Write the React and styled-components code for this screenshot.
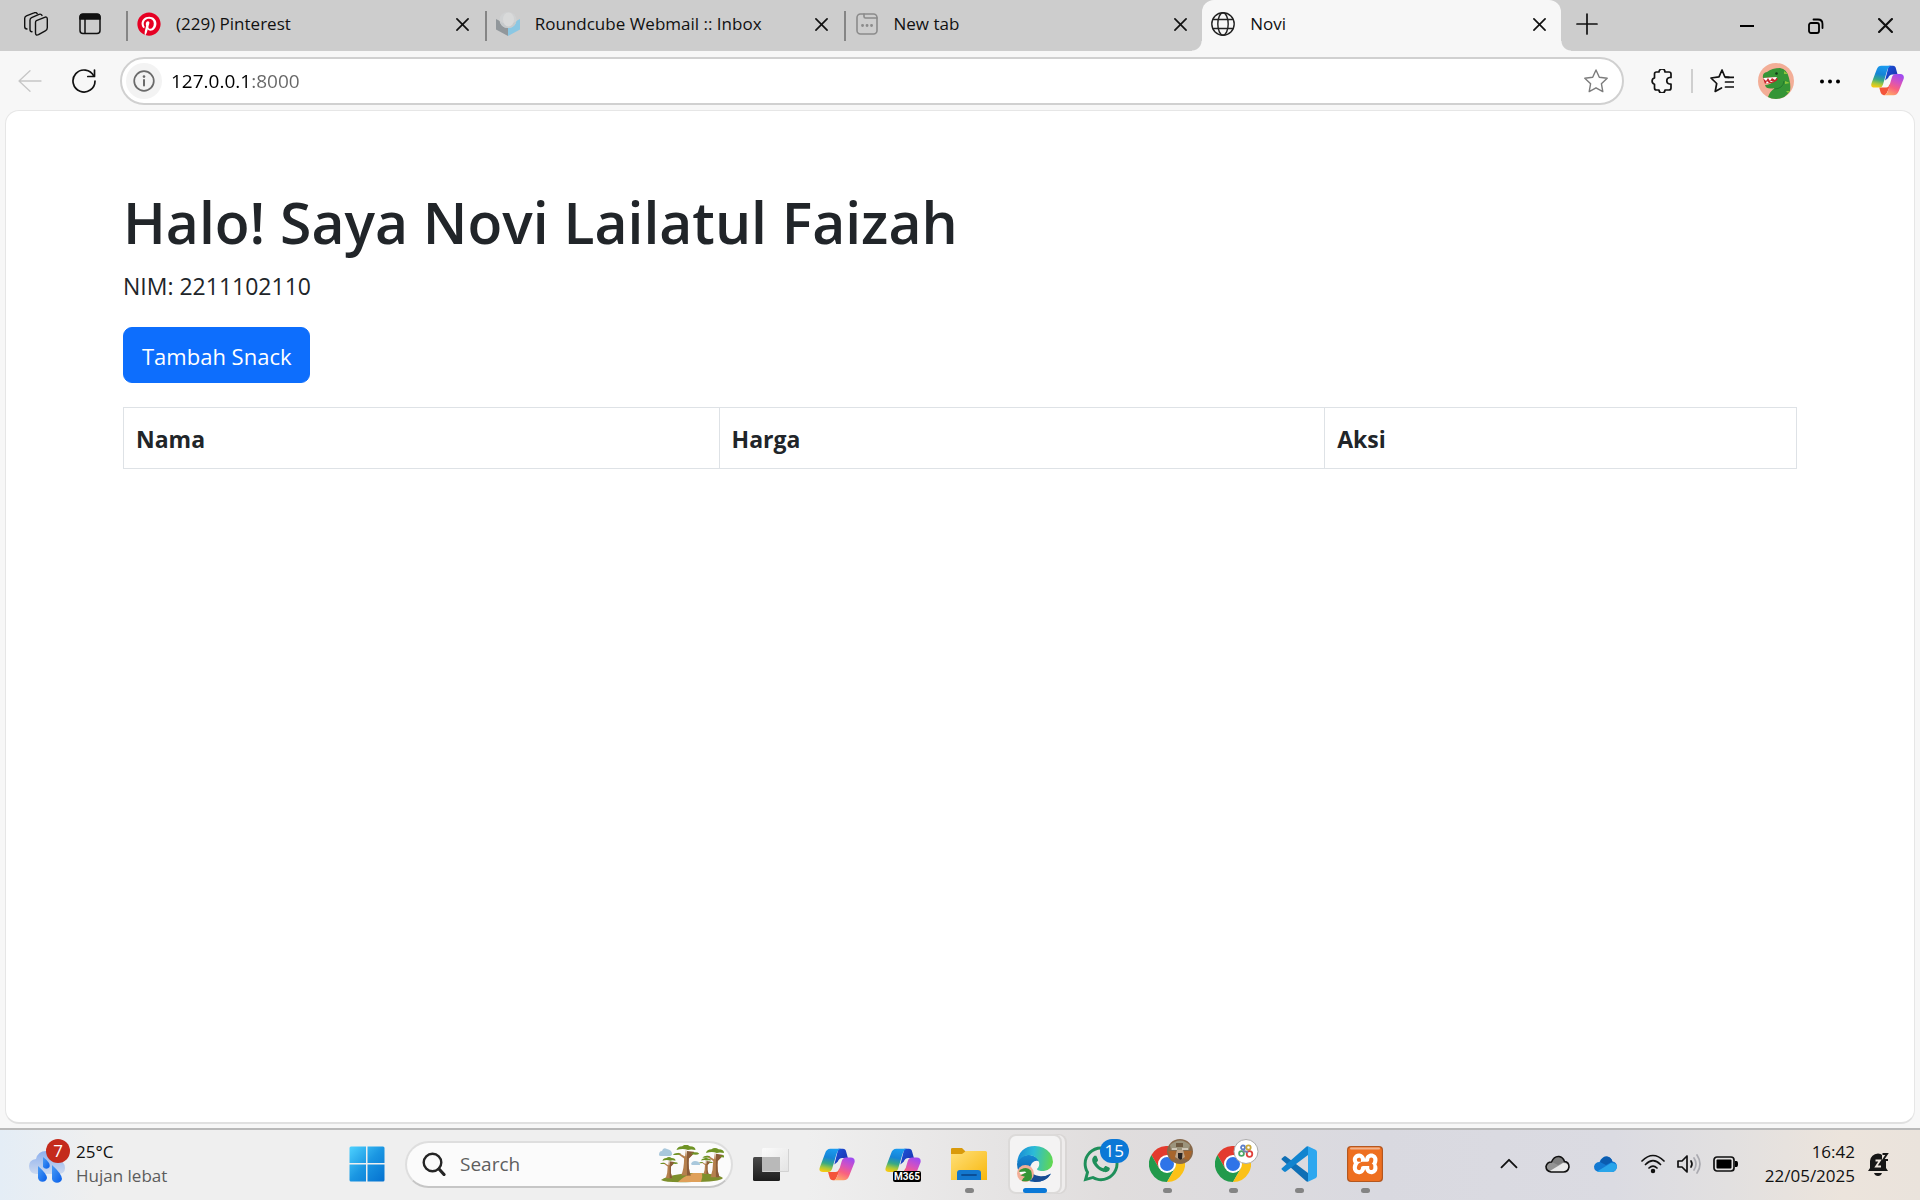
import React from "react";
import styled, { createGlobalStyle, css } from "styled-components";
import { FaPinterest, FaWhatsapp } from "react-icons/fa";
import { SiXampp } from "react-icons/si";

const GlobalStyle = createGlobalStyle`
  *, *::before, *::after { box-sizing: border-box; }
  body {
    margin: 0;
    font-family: "Segoe UI", "Open Sans", "Noto Sans", sans-serif;
    color: #111;
    background: #f7f7f7;
  }
  button, input { font: inherit; color: inherit; }
  svg { display: block; flex: none; }
`;

const Desktop = styled.div`
  display: flex;
  flex-direction: column;
  min-height: 100vh;
`;

/* ---------- browser chrome ---------- */

const TabStrip = styled.header`
  display: flex;
  height: 51px;
  background: #cdcdcd;
`;

const IconButton = styled.button`
  display: inline-flex;
  align-items: center;
  justify-content: center;
  flex: none;
  width: ${(p) => p.$width || 36}px;
  height: 36px;
  padding: 0;
  border: 0;
  border-radius: 6px;
  background: none;
  color: ${(p) => p.$color || "#111"};
`;

const StripTools = styled.div`
  display: flex;
  align-items: center;
  gap: 18px;
  width: 126px;
  height: 48px;
  padding-left: 18px;
`;

const Tabs = styled.nav`
  display: flex;
  flex: 0 1 1435px;
  min-width: 0;
`;

const TabItem = styled.div`
  position: relative;
  display: flex;
  align-items: center;
  flex: 1 1 0;
  min-width: 0;
  height: 51px;
  padding: 0 4px 3px 0;
  ${(p) =>
    p.$active &&
    css`
      background: #f7f7f7;
      border-radius: 12px 12px 0 0;
      &::before,
      &::after {
        content: "";
        position: absolute;
        bottom: 0;
        width: 10px;
        height: 10px;
      }
      &::before {
        left: -10px;
        background: radial-gradient(circle at 0 0, transparent 9px, #f7f7f7 10px);
      }
      &::after {
        right: -10px;
        background: radial-gradient(circle at 100% 0, transparent 9px, #f7f7f7 10px);
      }
    `}
`;

const TabDivider = styled.span`
  flex: none;
  width: 2px;
  height: 30px;
  margin-top: 4px;
  background: #858585;
`;

const TabLabel = styled.button`
  display: flex;
  align-items: center;
  gap: 15px;
  flex: 1;
  min-width: 0;
  height: 48px;
  padding: 0 0 0 9px;
  border: 0;
  background: none;
  font-size: 17px;
  line-height: 24px;
  text-align: left;
  white-space: nowrap;
`;

const WindowControls = styled.div`
  display: flex;
  align-items: center;
  gap: 33px;
  margin-left: auto;
  padding-right: 17px;
`;

const Toolbar = styled.div`
  display: flex;
  align-items: center;
  height: 59px;
  padding: 0 12px;
  background: #f7f7f7;
`;

const AddressBar = styled.form`
  display: flex;
  align-items: center;
  flex: 1;
  min-width: 0;
  height: 48px;
  margin: 0 20px 0 18px;
  padding: 0 8px 0 4px;
  border: 2px solid #d0d0d0;
  border-radius: 24px;
  background: #fff;
`;

const SiteInfo = styled(IconButton)`
  border-radius: 50%;
  background: #f3f3f3;
`;

const AddressInput = styled.input`
  flex: 1;
  min-width: 0;
  height: 36px;
  margin-left: 9px;
  padding: 0;
  border: 0;
  outline: 0;
  font-size: 19px;
  color: #666;
  background: linear-gradient(90deg, #000 80px, #666 80px);
  background-clip: text;
  -webkit-background-clip: text;
  -webkit-text-fill-color: transparent;
`;

const ToolGroup = styled.div`
  display: flex;
  align-items: center;
  gap: 18px;
`;

const ToolDivider = styled.span`
  width: 2px;
  height: 24px;
  margin: 0 -7px;
  background: #cfcfcf;
`;

/* ---------- web page ---------- */

const Frame = styled.div`
  display: flex;
  flex: 1;
  padding: 0 5px 4px;
  background: #f7f7f7;
  border-bottom: 2px solid #b9b9b9;
`;

const Page = styled.main`
  flex: 1;
  padding: 75px 117px 48px;
  border: 1px solid #e6e6e6;
  border-bottom: 2px solid #e0e0e0;
  border-radius: 14px;
  background: #fff;
  color: #212529;
  font-size: 23px;
  line-height: 36px;
`;

const Title = styled.h1`
  margin: 0 0 10px;
  font-size: 57px;
  font-weight: 600;
  line-height: 72px;
`;

const Student = styled.p`
  margin: 0 0 23px;
`;

const AddButton = styled.button`
  display: block;
  margin: 0 0 24px;
  padding: 10px 18px 8px;
  border: 1px solid #0d6efd;
  border-radius: 9px;
  background: #0d6efd;
  color: #fff;
  font-size: 22px;
`;

const SnackTable = styled.table`
  width: 100%;
  border-collapse: collapse;
  th {
    padding: 13px 12px 11px;
    border: 1px solid #dee2e6;
    text-align: left;
    font-weight: 700;
  }
`;

/* ---------- taskbar ---------- */

const Taskbar = styled.footer`
  display: flex;
  align-items: center;
  height: 70px;
  padding-bottom: 2px;
  background: linear-gradient(
    90deg,
    #e4edf6 0%,
    #efefef 5%,
    #efefef 42%,
    #e0dddd 58%,
    #d9d9e0 72%,
    #dbdbe2 84%,
    #e2e0e0 90%,
    #ece4dc 96%,
    #eae3dc 100%
  );
`;

const Weather = styled.button`
  display: flex;
  align-items: center;
  gap: 9px;
  width: 334px;
  height: 100%;
  padding: 0 0 0 29px;
  border: 0;
  background: none;
  text-align: left;
  font-size: 17px;
  line-height: 24px;
`;

const Muted = styled.span`
  display: block;
  color: #5c5c5c;
`;

const IconHolder = styled.span`
  position: relative;
  display: block;
`;

const Badge = styled.span`
  position: absolute;
  display: flex;
  align-items: center;
  justify-content: center;
  top: ${(p) => p.$top}px;
  right: ${(p) => p.$right}px;
  min-width: 24px;
  height: 24px;
  padding: 0 5px;
  border-radius: 12px;
  background: ${(p) => p.$color};
  color: #fff;
  font-size: 17px;
  line-height: 24px;
`;

const AppTag = styled.span`
  position: absolute;
  right: 0;
  bottom: -1px;
  padding: 0 1px;
  border-radius: 2px;
  background: #000;
  color: #fff;
  font: 700 10px/11px Roboto, sans-serif;
`;

const MiniAvatar = styled.span`
  position: absolute;
  top: -7px;
  right: -8px;
`;

const Apps = styled.div`
  display: flex;
  align-items: center;
  height: 100%;
`;

const AppButton = styled.button`
  position: relative;
  display: flex;
  align-items: center;
  justify-content: center;
  width: 66px;
  height: 68px;
  padding: 0;
  border: 0;
  background: none;
  &::after {
    content: "";
    display: ${(p) => (p.$running || p.$active ? "block" : "none")};
    position: absolute;
    bottom: 5px;
    left: 50%;
    width: ${(p) => (p.$active ? 24 : 9)}px;
    margin-left: ${(p) => (p.$active ? -12 : -4)}px;
    height: 5px;
    border-radius: 3px;
    background: ${(p) => (p.$active ? "#0a78d7" : "#848484")};
  }
`;

const ActivePlate = styled.span`
  display: flex;
  align-items: center;
  justify-content: center;
  width: 54px;
  height: 60px;
  border: 2px solid #dcdad9;
  border-radius: 8px;
  background: #f4f3f3;
  box-shadow: 4px 0 0 -1px #eeecec, 5px 0 0 0 #d9d6d5;
`;

const SearchBox = styled.label`
  display: flex;
  align-items: center;
  gap: 14px;
  width: 328px;
  height: 47px;
  margin: 0 5px;
  padding: 0 7px 0 15px;
  border: 2px solid #dedede;
  border-bottom-color: #c6c6c6;
  border-radius: 24px;
  background: #fbfbfb;
`;

const SearchInput = styled.input`
  flex: 1;
  min-width: 0;
  padding: 0;
  border: 0;
  outline: 0;
  background: none;
  font-size: 19px;
  &::placeholder {
    color: #5e5e5e;
    opacity: 1;
  }
`;

const Tray = styled.div`
  display: flex;
  align-items: center;
  margin-left: auto;
  padding-right: 17px;
`;

const Clock = styled.button`
  width: 106px;
  padding: 0;
  border: 0;
  background: none;
  text-align: right;
  font-size: 17px;
  line-height: 24px;
  white-space: nowrap;
`;

/* ---------- icons ---------- */

const Line = ({ size = 24, w = 1.5, children, ...rest }) => (
  <svg width={size} height={size} viewBox="0 0 24 24" fill="none" stroke="currentColor"
    strokeWidth={w} strokeLinecap="round" strokeLinejoin="round" aria-hidden="true" {...rest}>
    {children}
  </svg>
);

const WorkspacesIcon = () => (
  <Line w={1.4}>
    <path d="M12.4 8.6 20.6 5.3Q23.3 4.4 23.3 7V15.8Q23.3 18 21.3 18.9L14.5 22.7Q11.5 24 11.5 21V10.6Q11.5 9 12.4 8.6Z" />
    <path d="M8 19.8Q6 19.8 6 17.5V8.2Q6 6.4 7.6 5.6L15 2.4Q17 1.6 18 3.4" />
    <path d="M3 17Q.7 17 .7 14.5V6.2Q.7 4.6 2.4 3.8L10 .9Q12.2 0 13.2 1.6" />
  </Line>
);

const VerticalTabsIcon = () => (
  <Line>
    <rect x="2" y="2.5" width="20" height="19" rx="3" />
    <path d="M2 7V5.5Q2 2 5 2h14q3 0 3 3.500V7Z" fill="currentColor" />
    <path d="M7 7V21" />
  </Line>
);

const CloseIcon = ({ size = 14, w = 2 }) => (
  <svg width={size} height={size} viewBox="0 0 14 14" stroke="currentColor" strokeWidth={w} strokeLinecap="round" aria-hidden="true">
    <path d="M1 1 13 13M13 1 1 13" />
  </svg>
);

const PinterestIcon = () => (
  <svg width="24" height="24" viewBox="0 0 24 24" aria-hidden="true">
    <circle cx="12" cy="12" r="11" fill="#fff" />
    <FaPinterest size={24} color="#e60023" />
  </svg>
);

const RoundcubeIcon = () => (
  <svg width="24" height="24" viewBox="0 0 24 24" aria-hidden="true">
    <path d="M0 7 12 13.500V24L0 17.500Z" fill="#91979b" />
    <path d="M24 7 12 13.500V24l12-6.500Z" fill="#8ac7e3" />
    <ellipse cx="12" cy="8" rx="8.500" ry="8" fill="#d0d2d3" />
    <path d="M4 9.200 12 13.800 20.500 9.200Q19 15.800 12 15.800T4 9.200" fill="#c6cacc" />
    <ellipse cx="12.500" cy="7.500" rx="5.500" ry="7" fill="#d9dada" />
  </svg>
);

const NewTabIcon = () => (
  <Line w={1.6} color="#8b8b8b">
    <rect x="2" y="2" width="20" height="20" rx="3.500" />
    <path d="M9 2V4.500Q9 6 10.500 6H22" />
    <path d="M7.500 13.500h.1M12 13.500h.1M16.500 13.500h.1" strokeWidth="2.800" />
  </Line>
);

const GlobeIcon = () => (
  <Line w={1.4} color="#222">
    <circle cx="12" cy="12" r="11.200" />
    <ellipse cx="12" cy="12" rx="5.200" ry="11.200" />
    <path d="M2 7.500H22M2 16.500H22" />
  </Line>
);

const PlusIcon = () => <Line w={1.7}><path d="M12 2V22M2 12H22" /></Line>;

const MinimiseIcon = () => (
  <svg width="16" height="16" viewBox="0 0 16 16" aria-hidden="true"><path d="M1 8H15" stroke="#000" strokeWidth="2" /></svg>
);

const RestoreIcon = () => (
  <svg width="16" height="16" viewBox="0 0 16 16" fill="none" stroke="#000" strokeWidth="1.800" strokeLinecap="round" aria-hidden="true">
    <rect x="1" y="5" width="10" height="10" rx="2" />
    <path d="M5.500 1.500H10Q14.500 1.500 14.500 6V10" />
  </svg>
);

const BackIcon = () => <Line w={1.3}><path d="M23 12H1M12 1.800 1 12 12 22.200" /></Line>;

const RefreshIcon = () => (
  <Line w={1.7}>
    <path d="M21.800 7A11 11 0 1 0 23 12" />
    <path d="M22.500 1V7.500H15.800" />
  </Line>
);

const InfoIcon = () => (
  <Line w={1.7} color="#6a6a6a">
    <circle cx="12" cy="12" r="9.800" />
    <path d="M12 11V16.500" strokeWidth="2" />
    <path d="M12 7.600h.01" strokeWidth="2.600" />
  </Line>
);

const StarIcon = () => (
  <Line w={1.4} color="#7c7c7c">
    <path d="M12 1 15.300 8.200 23.200 9.200 17.400 14.700 18.800 22.600 12 18.800 5.200 22.600 6.600 14.700 .8 9.200 8.700 8.200Z" />
  </Line>
);

const PuzzleIcon = () => (
  <Line w={1.7}>
    <path d="M9 3A3 3 0 0 1 15 3H19Q21 3 21 5V8.500H19.500A3.300 3.300 0 0 0 19.500 15H21V19Q21 21 19 21H15A3 3 0 0 1 9 21H6.500Q4.500 21 4.500 19V15.200A3.200 3.200 0 0 1 4.500 9V5Q4.500 3 6.500 3Z" />
  </Line>
);

const FavouritesIcon = () => (
  <Line w={1.7}>
    <path d="M19 8.300 14.800 7.800 12 1 9 7.800 1 9 6.700 14.500 5.200 22.500 11.500 19" />
    <path d="M15.500 8.300H23.500M15.500 13H23.500M15.500 18H23.500" />
  </Line>
);

const DinoArt = ({ size = 36 }) => (
  <svg width={size} height={size} viewBox="0 0 36 36" aria-hidden="true">
    <circle cx="18" cy="18" r="18" fill="#f3ae97" />
    <path d="M10 34Q12 28 17 25Q8 27 7 22Q12 22 16 18L5 15Q4 10 9 9Q14 5 22 5Q29 6 31 15Q33 22 32 28Q27 36 18 36Q13 36 10 34Z" fill="#359536" />
    <path d="M5 15 17 14 20 16Q17 21 8 20L7 21Z" fill="#c8272d" />
    <path d="M5 15 8 18 10 15 12 18 14 15 17 17 19 14ZM8 20 9 18 11 20 13 18 14 19 16 18Z" fill="#fff" />
    <circle cx="18.500" cy="10.500" r="1.300" fill="#143b1a" />
    <path d="M26 8 30 11 26 11ZM27 18 32 20 27 21ZM28 28 32 28 30 30Z" fill="#8bc63a" />
    <path d="M16 26Q25 26 26 18" fill="none" stroke="#237a2c" />
  </svg>
);

const DotsIcon = () => (
  <svg width="24" height="24" viewBox="0 0 24 24" aria-hidden="true">
    <circle cx="4" cy="12.500" r="2" /><circle cx="12" cy="12.500" r="2" /><circle cx="20" cy="12.500" r="2" />
  </svg>
);

const CopilotIcon = ({ id, size = 36 }) => (
  <svg width={size} height={Math.round(size * 0.93)} viewBox="0 0 108 100" aria-hidden="true">
    <defs>
      <linearGradient id={`${id}-a`} x1=".6" y1="0" x2=".4" y2="1">
        <stop offset="0" stopColor="#1b9cf0" /><stop offset=".4" stopColor="#1584d6" />
        <stop offset=".66" stopColor="#38a985" /><stop offset=".85" stopColor="#a8c83a" /><stop offset="1" stopColor="#f3ca14" />
      </linearGradient>
      <linearGradient id={`${id}-b`} x1=".7" y1="0" x2=".3" y2="1">
        <stop offset="0" stopColor="#a04bf0" /><stop offset=".35" stopColor="#d452c0" />
        <stop offset=".65" stopColor="#f9617f" /><stop offset="1" stopColor="#ffa868" />
      </linearGradient>
      <linearGradient id={`${id}-c`} x1="0" y1="0" x2="1" y2="1">
        <stop offset="0" stopColor="#1b55dd" /><stop offset="1" stopColor="#1a2fa8" />
      </linearGradient>
    </defs>
    <path d="M58 2H72Q80 2 82 12L87 30H70Q60 30 56 42L46 50Z" fill={`url(#${id}-c)`} />
    <path d="M27 73H50Q58 73 60 64L66 60 54 86Q50 98 42 98 34 98 31 88Z" fill="#f4553a" />
    <path d="M34 2Q22 2 18 16L2 58Q-3 73 12 73H30Q36 73 39 64L52 20Q57 2 68 2Z" fill={`url(#${id}-a)`} />
    <path d="M96 29Q110 30 107 44L91 84Q86 98 74 98H42Q52 98 56 82L68 41Q71 29 82 29Z" fill={`url(#${id}-b)`} />
  </svg>
);

const RainIcon = () => (
  <svg width="38" height="42" viewBox="0 0 38 42" aria-hidden="true">
    <defs>
      <linearGradient id="cloud" x1="0" y1="0" x2="0" y2="1"><stop offset="0" stopColor="#8db0ee" /><stop offset="1" stopColor="#ccd9ef" /></linearGradient>
      <linearGradient id="drop" x1="0" y1="0" x2="1" y2="1"><stop offset="0" stopColor="#4b9df5" /><stop offset="1" stopColor="#075dea" /></linearGradient>
    </defs>
    <path d="M7 31Q0 30 0 23 0 17 7 16 9 8 17 8 25 9 28 17 36 18 36 25 36 31 29 31Z" fill="url(#cloud)" />
    <path d="M14 14Q22 20 20.500 24A4 4 0 0 1 14 24Z" fill="url(#drop)" />
    <path d="M9 23Q18 31 18 35A4.600 4.600 0 0 1 9 35Z" fill="url(#drop)" />
    <path d="M23 22Q33 31 33 36A5.200 5.200 0 0 1 23 36Z" fill="url(#drop)" />
  </svg>
);

const WindowsIcon = () => (
  <svg width="36" height="36" viewBox="0 0 36 36" aria-hidden="true">
    <defs><linearGradient id="win" x1="0" y1="0" x2="36" y2="36" gradientUnits="userSpaceOnUse"><stop offset="0" stopColor="#4fd3ff" /><stop offset=".5" stopColor="#1a96e2" /><stop offset="1" stopColor="#0470cf" /></linearGradient></defs>
    <path d="M2 .5H17V17H.5V2Q.5.5 2 .5ZM18.500.5H34Q35.500.5 35.500 2V17H18.500ZM.5 18.500H17V35.500H2Q.5 35.500.5 34ZM18.500 18.500H35.500V34Q35.500 35.500 34 35.500H18.500Z" fill="url(#win)" />
  </svg>
);

const SearchIcon = () => (
  <svg width="24" height="24" viewBox="0 0 24 24" fill="none" stroke="#252525" aria-hidden="true">
    <circle cx="10.500" cy="10.500" r="8.800" strokeWidth="2.400" /><path d="M17 17 22 22.500" strokeWidth="3.200" strokeLinecap="round" />
  </svg>
);

const Baobab = ({ x, y, s }) => (
  <g transform={`translate(${x} ${y}) scale(${s})`}>
    <path d="M-5 28Q-2 20-2 10L-9 5-8 4-1 8 0 0 1 8 8 3 9 4 3 10Q2 20 5 28Z" fill="#b5804d" />
    <path d="M1 2 8 3 9 4 3 10Q2 20 5 28H1Z" fill="#8a5c38" />
    <path d="M-10 1Q-9-3-4-3 0-6 4-3 10-3 10 1 5 0 2 1-3-1-10 1ZM-14 6Q-11 3-5 5-8 7-14 6ZM5 5Q11 2 14 5 11 7 5 5Z" fill="#6f9325" />
  </g>
);

const SavannahArt = () => (
  <svg width="66" height="38" viewBox="0 0 66 38" aria-hidden="true">
    <path d="M1 10Q1 6 4 6 5 2 9 4 14 5 14 9 14 11 11 11H3Q1 11 1 10ZM33 19Q34 16 37 16 41 16 42 19V20H34Z" fill="#a9c8dc" />
    <path d="M3 35Q12 29 35 28 58 28 65 33 62 37 34 37 8 38 3 35Z" fill="#7d8f2c" />
    <path d="M20 37Q26 31 35 28L44 28Q45 32 43 37Z" fill="#dfa05a" />
    <Baobab x={11} y={15} s={0.65} /><Baobab x={28} y={4} s={0.95} />
    <Baobab x={48} y={15} s={0.5} /><Baobab x={57} y={7} s={0.9} />
  </svg>
);

const TaskViewIcon = () => (
  <svg width="36" height="36" viewBox="0 0 36 36" aria-hidden="true">
    <defs>
      <linearGradient id="tv" x1="0" y1="0" x2="0" y2="1"><stop offset="0" stopColor="#4a4a4a" /><stop offset="1" stopColor="#1c1c1c" /></linearGradient>
      <linearGradient id="tvLight" x1="0" y1="0" x2="1" y2="1"><stop offset="0" stopColor="#fbfbfb" /><stop offset="1" stopColor="#e3e3e3" /></linearGradient>
    </defs>
    <rect x="0" y="11" width="27" height="24" rx="1.500" fill="url(#tv)" />
    <rect x="9" y="2" width="27" height="24" rx="1.500" fill="url(#tvLight)" />
    <path d="M9 11H27V26H9Z" fill="#b9b9b9" />
    <path d="M35.500 3V25.500H10" fill="none" stroke="#d2d2d2" />
  </svg>
);

const FolderIcon = () => (
  <svg width="36" height="36" viewBox="0 0 36 36" aria-hidden="true">
    <defs><linearGradient id="fold" x1="0" y1="0" x2="1" y2="1"><stop offset="0" stopColor="#ffe07a" /><stop offset="1" stopColor="#f8b70c" /></linearGradient></defs>
    <path d="M0 9V3Q0 2 1.500 2H11L15 6 13 9Z" fill="#d99a0b" />
    <path d="M0 8H11L15 5H34.500Q36 5 36 6.500V34H0Z" fill="url(#fold)" />
    <path d="M6 34V27Q6 24 9 24H27Q30 24 30 27V34Z" fill="#1378cf" /><path d="M11 29H25" stroke="#0b4f97" strokeWidth="1.800" strokeLinecap="round" />
  </svg>
);

const EdgeIcon = () => (
  <svg width="36" height="36" viewBox="0 0 36 36" aria-hidden="true">
    <defs>
      <linearGradient id="edgeTop" x1="0" y1=".4" x2="1" y2=".5"><stop offset="0" stopColor="#188bd6" /><stop offset=".45" stopColor="#2cbbd7" /><stop offset="1" stopColor="#62d84e" /></linearGradient>
      <linearGradient id="edgeMid" x1="0" y1="0" x2="0" y2="1"><stop offset="0" stopColor="#1688d2" /><stop offset="1" stopColor="#0b56a4" /></linearGradient>
    </defs>
    <path d="M0 18Q1 8 13 9 20 10 23 16 19 13 15 17 11 22 16 28 23 34 34 28 29 36 18 36 1 35 0 18Z" fill="url(#edgeMid)" />
    <path d="M13 22Q14 29 22 30 28 31 34 27.500 29 36 18 36 11 32 13 22Z" fill="#174c93" />
    <path d="M0 17Q2 0 18 0 27 0 33 7 36 11 36 16 35 24 27 25 20 25 20 23 23 20 22 16 19 9 11 9 4 10 0 17Z" fill="url(#edgeTop)" />
    <g transform="translate(0 19) scale(.47)">
      <circle cx="18" cy="18" r="18" fill="#f3ae97" />
      <path d="M10 34Q12 28 17 25L7 22 16 18 5 15Q4 10 9 9 22 2 30 12 33 22 31 29 25 37 10 34Z" fill="#359536" />
      <path d="M5 15 17 14 20 16 8 20Z" fill="#fff" />
    </g>
  </svg>
);

const ChromeIcon = () => (
  <svg width="36" height="36" viewBox="0 0 36 36" aria-hidden="true">
    <path d="M2.400 9A18 18 0 0 1 33.600 9H18L10.200 22.500Z" fill="#e33b2e" />
    <path d="M2.400 9 10.200 22.500H25.800L18 36A18 18 0 0 1 2.400 9Z" fill="#229a4b" />
    <path d="M33.600 9H18L25.800 22.500 18 36A18 18 0 0 0 33.600 9Z" fill="#fbc116" />
    <circle cx="18" cy="18" r="9" fill="#fff" /><circle cx="18" cy="18" r="7" fill="#2f74e8" />
  </svg>
);

const PhotoAvatarArt = () => (
  <svg width="26" height="25" viewBox="0 0 26 25" aria-hidden="true">
    <ellipse cx="13" cy="12.500" rx="13" ry="12.500" fill="#86684a" />
    <path d="M3 6Q13-3 23 6L22 11H4Z" fill="#9c947c" />
    <path d="M1 12H9L8 21 4 20ZM17 12H25L22 21 17 20Z" fill="#a8652c" />
    <path d="M10 11H16L18 18 13 21 8 18Z" fill="#bfa488" /><path d="M11 14H15.500L15 20 13 21 11 19Z" fill="#2b2422" />
    <path d="M5 10H10M15 10H21" stroke="#e0d8ca" strokeWidth="1.500" /><path d="M9 4H16V8H9Z" fill="#6f5a40" />
  </svg>
);

const RingsAvatarArt = () => (
  <svg width="26" height="25" viewBox="0 0 26 25" fill="none" strokeWidth="1.800" aria-hidden="true">
    <circle cx="13" cy="12.500" r="12" fill="#fff" stroke="#aaa" strokeWidth="1" />
    <circle cx="10" cy="8.500" r="2" stroke="#5d7fc9" /><circle cx="15.500" cy="8.500" r="2.200" stroke="#c9a93c" />
    <circle cx="8.500" cy="14.500" r="2.400" stroke="#4ba765" /><circle cx="16.500" cy="15" r="2.800" stroke="#e0413c" />
    <path d="M10 12 15 13" stroke="#7d7fa8" />
  </svg>
);

const VSCodeIcon = () => (
  <svg width="36" height="36" viewBox="0 0 36 36" aria-hidden="true">
    <path d="M.7 12.500 3 10.400Q4 9.700 5 10.400L27 27V35.500Q26 36 25 35L.8 13.800Q.2 13.200.7 12.500Z" fill="#0f6fb5" />
    <path d="M.7 23.500 3 25.600Q4 26.300 5 25.600L27 9V.5Q26 0 25 1L.8 22.200Q.2 22.800.7 23.500Z" fill="#1184cf" />
    <path d="M27 .3 34.500 3.800Q36 4.500 36 6V30Q36 31.500 34.500 32.200L27 35.700Z" fill="#2da7ef" />
  </svg>
);

const XamppIcon = () => (
  <svg width="36" height="36" viewBox="0 0 36 36" aria-hidden="true">
    <rect width="36" height="36" rx="4" fill="#b4571f" />
    <rect x="4" y="4" width="28" height="28" fill="#fff" />
    <SiXampp x="1" y="1" size={34} color="#ee6f20" />
    <path d="M4 2.500H32" stroke="#f0b38d" strokeWidth="2" strokeLinecap="round" />
  </svg>
);

const ChevronIcon = () => <Line w={2.2} size={20}><path d="M3 16 12 7 21 16" /></Line>;

const cloudPath = "M6 17Q1 16 1 11.500 2 7 6.500 7 9 1 14 1.500 18 2 19.500 6.500 24 7 24 12 23 17 18.500 17Z";

const CloudIcon = ({ tone }) => {
  const blue = tone === "blue";
  return (
    <svg width="25" height="18" viewBox="0 0 25 18" aria-hidden="true">
      <path d={cloudPath} fill={blue ? "#1379d2" : "#949494"} />
      <path d="M7 7Q10 1 14 1.500 18 2 19.500 6.500L13 10Z" fill={blue ? "#0b5cb0" : "#7d7d7d"} />
      <path d="M4 16.500 18 8Q24 8 24 12 23 17 18.500 17H6Z" fill={blue ? "#29a5ea" : "#e9e9e9"} />
      {!blue && <path d={cloudPath} fill="none" stroke="#111" strokeWidth="1.600" />}
    </svg>
  );
};

const WifiIcon = () => (
  <Line w={1.7}>
    <path d="M1 9Q12-2 23 9M4.500 12.500Q12 5 19.500 12.500M8 16Q12 12 16 16" /><circle cx="12" cy="19" r="1.400" fill="currentColor" />
  </Line>
);

const VolumeIcon = () => (
  <Line w={1.7}>
    <path d="M1 9H5L10 4V20L5 15H1Z" /><path d="M14 9Q16 12 14 15" />
    <path d="M17 6Q21 12 17 18M20 3Q26 12 20 21" stroke="#aaaab0" />
  </Line>
);

const BatteryIcon = () => (
  <svg width="25" height="16" viewBox="0 0 25 16" aria-hidden="true">
    <rect x="1" y="1" width="20" height="14" rx="3" fill="none" stroke="#111" strokeWidth="1.700" />
    <rect x="3.500" y="3.500" width="15" height="9" rx="1" /><path d="M22 5H23.500Q25 5 25 8T23.500 11H22Z" />
  </svg>
);

const BellIcon = () => (
  <svg width="22" height="24" viewBox="0 0 22 24" aria-hidden="true">
    <path d="M2 16V9Q3 2 10 1.500 13 1.500 14 3V9H18V16L20 19H0Z" fill="#161616" />
    <path d="M6 21H14Q13 24 10 24T6 21Z" fill="#161616" />
    <path d="M14.500 2H19L15 8H20" fill="none" stroke="#161616" strokeWidth="1.900" />
    <path d="M7.500 8.500H12L8 14.500H13" fill="none" stroke="#ece4dc" strokeWidth="1.800" />
  </svg>
);

/* ---------- composition ---------- */

const tabs = [
  { title: "(229) Pinterest", icon: <PinterestIcon /> },
  { title: "Roundcube Webmail :: Inbox", icon: <RoundcubeIcon /> },
  { title: "New tab", icon: <NewTabIcon /> },
  { title: "Novi", icon: <GlobeIcon />, active: true },
];

const apps = [
  { name: "Task view", icon: <TaskViewIcon /> },
  { name: "Copilot", icon: <CopilotIcon id="cp1" /> },
  { name: "Microsoft 365", icon: <IconHolder><CopilotIcon id="cp2" /><AppTag>M365</AppTag></IconHolder> },
  { name: "File Explorer", icon: <FolderIcon />, running: true },
  { name: "Microsoft Edge", icon: <ActivePlate><EdgeIcon /></ActivePlate>, active: true },
  { name: "WhatsApp", icon: <IconHolder><FaWhatsapp size={40} color="#1f8f5a" /><Badge $top={-5} $right={-8} $color="#0b78d6">15</Badge></IconHolder> },
  { name: "Chrome, first profile", icon: <IconHolder><ChromeIcon /><MiniAvatar><PhotoAvatarArt /></MiniAvatar></IconHolder>, running: true },
  { name: "Chrome, second profile", icon: <IconHolder><ChromeIcon /><MiniAvatar><RingsAvatarArt /></MiniAvatar></IconHolder>, running: true },
  { name: "Visual Studio Code", icon: <VSCodeIcon />, running: true },
  { name: "XAMPP", icon: <XamppIcon />, running: true },
];

export default function App() {
  return (
    <Desktop>
      <GlobalStyle />
      <TabStrip>
        <StripTools>
          <IconButton aria-label="Workspaces"><WorkspacesIcon /></IconButton>
          <IconButton aria-label="Tab actions"><VerticalTabsIcon /></IconButton>
        </StripTools>
        <Tabs aria-label="Open tabs">
          {tabs.map((t) => (
            <TabItem key={t.title} $active={t.active}>
              {!t.active && <TabDivider />}
              <TabLabel type="button">{t.icon}{t.title}</TabLabel>
              <IconButton aria-label={`Close ${t.title}`}><CloseIcon size={13} w={1.8} /></IconButton>
            </TabItem>
          ))}
        </Tabs>
        <StripTools>
          <IconButton $width={16} aria-label="New tab"><PlusIcon /></IconButton>
        </StripTools>
        <WindowControls>
          <IconButton aria-label="Minimise"><MinimiseIcon /></IconButton>
          <IconButton aria-label="Restore"><RestoreIcon /></IconButton>
          <IconButton aria-label="Close window"><CloseIcon size={15} /></IconButton>
        </WindowControls>
      </TabStrip>

      <Toolbar>
        <ToolGroup>
          <IconButton $color="#c6c6c6" aria-label="Back"><BackIcon /></IconButton>
          <IconButton aria-label="Refresh"><RefreshIcon /></IconButton>
        </ToolGroup>
        <AddressBar onSubmit={(e) => e.preventDefault()}>
          <SiteInfo type="button" aria-label="Site information"><InfoIcon /></SiteInfo>
          <AddressInput aria-label="Address" defaultValue="127.0.0.1:8000" spellCheck={false} />
          <IconButton type="button" aria-label="Add to favourites"><StarIcon /></IconButton>
        </AddressBar>
        <ToolGroup>
          <IconButton aria-label="Extensions"><PuzzleIcon /></IconButton>
          <ToolDivider />
          <IconButton aria-label="Favourites"><FavouritesIcon /></IconButton>
          <IconButton aria-label="Profile"><DinoArt /></IconButton>
          <IconButton aria-label="Settings and more"><DotsIcon /></IconButton>
          <IconButton $width={42} aria-label="Copilot"><CopilotIcon id="cp0" size={33} /></IconButton>
        </ToolGroup>
      </Toolbar>

      <Frame>
        <Page>
          <Title>Halo! Saya Novi Lailatul Faizah</Title>
          <Student>NIM: 2211102110</Student>
          <AddButton type="button">Tambah Snack</AddButton>
          <SnackTable>
            <colgroup>
              <col width="35.6%" />
              <col width="36.2%" />
              <col width="28.2%" />
            </colgroup>
            <thead>
              <tr>
                <th scope="col">Nama</th>
                <th scope="col">Harga</th>
                <th scope="col">Aksi</th>
              </tr>
            </thead>
          </SnackTable>
        </Page>
      </Frame>

      <Taskbar>
        <Weather type="button">
          <IconHolder><RainIcon /><Badge $top={-4} $right={-3} $color="#c42b1c">7</Badge></IconHolder>
          <span>25°C<Muted>Hujan lebat</Muted></span>
        </Weather>
        <Apps>
          <AppButton aria-label="Start"><WindowsIcon /></AppButton>
          <SearchBox>
            <SearchIcon />
            <SearchInput type="text" placeholder="Search" aria-label="Search" />
            <SavannahArt />
          </SearchBox>
          {apps.map((a) => (
            <AppButton key={a.name} aria-label={a.name} $running={a.running} $active={a.active}>{a.icon}</AppButton>
          ))}
        </Apps>
        <Tray>
          <IconButton $width={48} aria-label="Show hidden icons"><ChevronIcon /></IconButton>
          <IconButton $width={48} aria-label="Cloud sync"><CloudIcon tone="grey" /></IconButton>
          <IconButton $width={48} aria-label="OneDrive"><CloudIcon tone="blue" /></IconButton>
          <IconButton $width={48} aria-label="Network"><WifiIcon /></IconButton>
          <IconButton $width={24} aria-label="Volume"><VolumeIcon /></IconButton>
          <IconButton $width={48} aria-label="Battery"><BatteryIcon /></IconButton>
          <Clock type="button">16:42<br />22/05/2025</Clock>
          <IconButton $width={48} aria-label="Notifications"><BellIcon /></IconButton>
        </Tray>
      </Taskbar>
    </Desktop>
  );
}
